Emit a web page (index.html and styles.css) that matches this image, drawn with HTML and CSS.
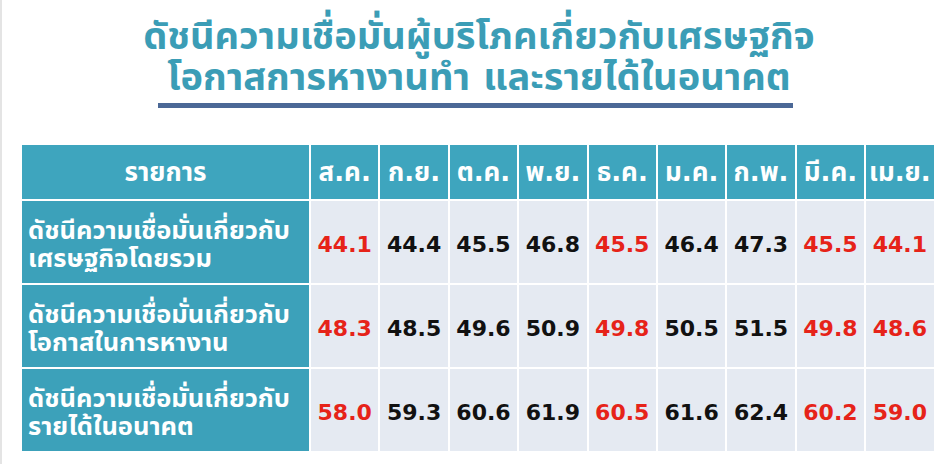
FILE: index.html
```html
<!DOCTYPE html>
<html lang="th">
<head>
<meta charset="utf-8">
<link rel="stylesheet" href="styles.css">
</head>
<body>
<div class="page">
  <header class="title">
    <h1><span class="line">ดัชนีความเชื่อมั่นผู้บริโภคเกี่ยวกับเศรษฐกิจ</span><span class="line">โอกาสการหางานทำ และรายได้ในอนาคต</span></h1>
    <div class="rule"></div>
  </header>
  <table class="grid">
    <colgroup>
      <col class="c-label">
      <col class="c-m"><col class="c-m"><col class="c-m"><col class="c-m"><col class="c-m"><col class="c-m"><col class="c-m"><col class="c-m"><col class="c-m">
    </colgroup>
    <thead>
      <tr>
        <th>รายการ</th><th>ส.ค.</th><th>ก.ย.</th><th>ต.ค.</th><th>พ.ย.</th><th>ธ.ค.</th><th>ม.ค.</th><th>ก.พ.</th><th>มี.ค.</th><th>เม.ย.</th>
      </tr>
    </thead>
    <tbody>
      <tr>
        <th class="label">ดัชนีความเชื่อมั่นเกี่ยวกับ<br>เศรษฐกิจโดยรวม</th>
        <td class="red">44.1</td><td>44.4</td><td>45.5</td><td>46.8</td><td class="red">45.5</td><td>46.4</td><td>47.3</td><td class="red">45.5</td><td class="red">44.1</td>
      </tr>
      <tr>
        <th class="label">ดัชนีความเชื่อมั่นเกี่ยวกับ<br>โอกาสในการหางาน</th>
        <td class="red">48.3</td><td>48.5</td><td>49.6</td><td>50.9</td><td class="red">49.8</td><td>50.5</td><td>51.5</td><td class="red">49.8</td><td class="red">48.6</td>
      </tr>
      <tr>
        <th class="label">ดัชนีความเชื่อมั่นเกี่ยวกับ<br>รายได้ในอนาคต</th>
        <td class="red">58.0</td><td>59.3</td><td>60.6</td><td>61.9</td><td class="red">60.5</td><td>61.6</td><td>62.4</td><td class="red">60.2</td><td class="red">59.0</td>
      </tr>
    </tbody>
  </table>
</div>
</body>
</html>
```
FILE: styles.css
```css
html, body {
  margin: 0;
  padding: 0;
  background: #ffffff;
}
body {
  font-family: "Tahoma", "DejaVu Sans", "Noto Sans Thai", "Noto Sans", sans-serif;
}
.page {
  width: 950px;
  height: 464px;
  box-sizing: border-box;
  border-left: 2px solid #e4e4e4;
  padding: 16px 0 0 18px;
  overflow: hidden;
}
.title {
  display: flex;
  flex-direction: column;
  align-items: center;
  width: 914px;
}
.title h1 {
  margin: 0;
  font-size: 38px;
  line-height: 41px;
  font-weight: bold;
  color: #3b9db6;
  text-align: center;
  padding-left: 4px;
  display: flex;
  flex-direction: column;
  align-items: center;
}
.title .line {
  display: block;
}
.rule {
  width: 635px;
  height: 5px;
  background: #4b6896;
  margin-top: 5px;
  margin-left: -4px;
}
.grid {
  margin-top: 35px;
  border-collapse: collapse;
  table-layout: fixed;
  width: 914px;
}
.c-label { width: 289px; }
.c-m { width: 69.4px; }
.grid th, .grid td {
  border: 2px solid #ffffff;
  padding: 0;
}
.grid thead th {
  height: 52px;
  background: #3ea5be;
  color: #ffffff;
  font-size: 26px;
  font-weight: bold;
  text-align: center;
  padding-top: 2px;
}
.grid tbody tr { height: 84px; }
.grid tbody th.label {
  background: #3ca1ba;
  color: #ffffff;
  font-size: 25.5px;
  line-height: 28px;
  font-weight: bold;
  text-align: left;
  padding-left: 6px;
  padding-top: 4px;
}
.grid td {
  background: #e5eaf2;
  color: #111111;
  font-family: "DejaVu Sans", "Verdana", sans-serif;
  font-weight: bold;
  font-size: 22px;
  text-align: center;
  padding-top: 4px;
}
.grid td.red { color: #e62319; }
```
